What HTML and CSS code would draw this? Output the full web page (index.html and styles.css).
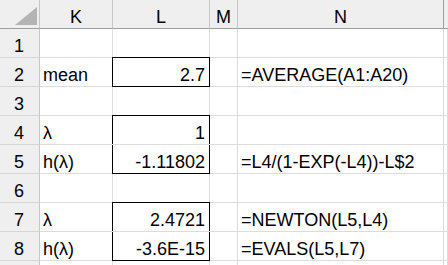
FILE: index.html
```html
<!DOCTYPE html>
<html>
<head>
<meta charset="utf-8">
<link rel="stylesheet" href="styles.css">
</head>
<body>
<div class="sheet">
  <div class="hd corner"><svg class="tri" width="22" height="18" viewBox="0 0 22 18"><polygon points="0,18 22,18 22,0" fill="#b4b4b4"/></svg></div>
  <div class="hd col">K</div>
  <div class="hd col">L</div>
  <div class="hd col">M</div>
  <div class="hd col">N</div>
  <div class="hd col last"></div>

  <div class="rh">1</div><div class="c"></div><div class="c"></div><div class="c"></div><div class="c"></div><div class="c"></div>
  <div class="rh">2</div><div class="c">mean</div><div class="c num box">2.7</div><div class="c"></div><div class="c">=AVERAGE(A1:A20)</div><div class="c"></div>
  <div class="rh">3</div><div class="c"></div><div class="c"></div><div class="c"></div><div class="c"></div><div class="c"></div>
  <div class="rh">4</div><div class="c">λ</div><div class="c num box-top">1</div><div class="c"></div><div class="c"></div><div class="c"></div>
  <div class="rh">5</div><div class="c">h(λ)</div><div class="c num box-bottom">-1.11802</div><div class="c"></div><div class="c">=L4/(1-EXP(-L4))-L$2</div><div class="c"></div>
  <div class="rh">6</div><div class="c"></div><div class="c"></div><div class="c"></div><div class="c"></div><div class="c"></div>
  <div class="rh">7</div><div class="c">λ</div><div class="c num box-top">2.4721</div><div class="c"></div><div class="c">=NEWTON(L5,L4)</div><div class="c"></div>
  <div class="rh">8</div><div class="c">h(λ)</div><div class="c num box-bottom">-3.6E-15</div><div class="c"></div><div class="c">=EVALS(L5,L7)</div><div class="c"></div>
  <div class="rh"></div><div class="c"></div><div class="c"></div><div class="c"></div><div class="c"></div><div class="c"></div>
</div>
</body>
</html>
```
FILE: styles.css
```css
html, body {
  margin: 0;
  padding: 0;
  background: #ffffff;
  overflow: hidden;
}
.sheet {
  display: grid;
  grid-template-columns: 40px 73px 97px 28px 206px 4px;
  grid-auto-rows: 29px;
  width: 448px;
  height: 265px;
  overflow: hidden;
  font-family: "Liberation Sans", Arial, sans-serif;
  font-size: 18px;
  line-height: 18px;
  color: #000;
}
.sheet > div {
  box-sizing: border-box;
  display: flex;
  align-items: flex-end;
  padding-bottom: 2px;
  white-space: nowrap;
  overflow: visible;
  position: relative;
}
.hd {
  background: #efefef;
  border-right: 1px solid #c6c6c6;
  border-bottom: 1px solid #9e9e9e;
  justify-content: center;
}
.hd.col:nth-child(5) {
  border-right-color: #9e9e9e;
}
.hd.last {
  border-right: none;
}
.corner {
  position: relative;
}
.tri {
  position: absolute;
  left: 15px;
  top: 7px;
}
.rh {
  background: #efefef;
  border-right: 1px solid #c6c6c6;
  border-bottom: 1px solid #d6d6d6;
  justify-content: center;
  padding-right: 1px;
}
.c {
  border-right: 1px solid #dcdcdc;
  border-bottom: 1px solid #dcdcdc;
  padding-left: 3px;
}
.num {
  justify-content: flex-end;
  padding-left: 0;
  padding-right: 4px;
}
.box::after,
.box-top::after,
.box-bottom::after {
  content: "";
  position: absolute;
  left: -1px;
  right: -1px;
  border-left: 1px solid #000;
  border-right: 1px solid #000;
  pointer-events: none;
}
.box::after {
  top: -1px;
  bottom: -1px;
  border-top: 1px solid #000;
  border-bottom: 1px solid #000;
}
.box-top::after {
  top: -1px;
  bottom: 0;
  border-top: 1px solid #000;
}
.box-bottom::after {
  top: 0;
  bottom: -1px;
  border-bottom: 1px solid #000;
}
```
